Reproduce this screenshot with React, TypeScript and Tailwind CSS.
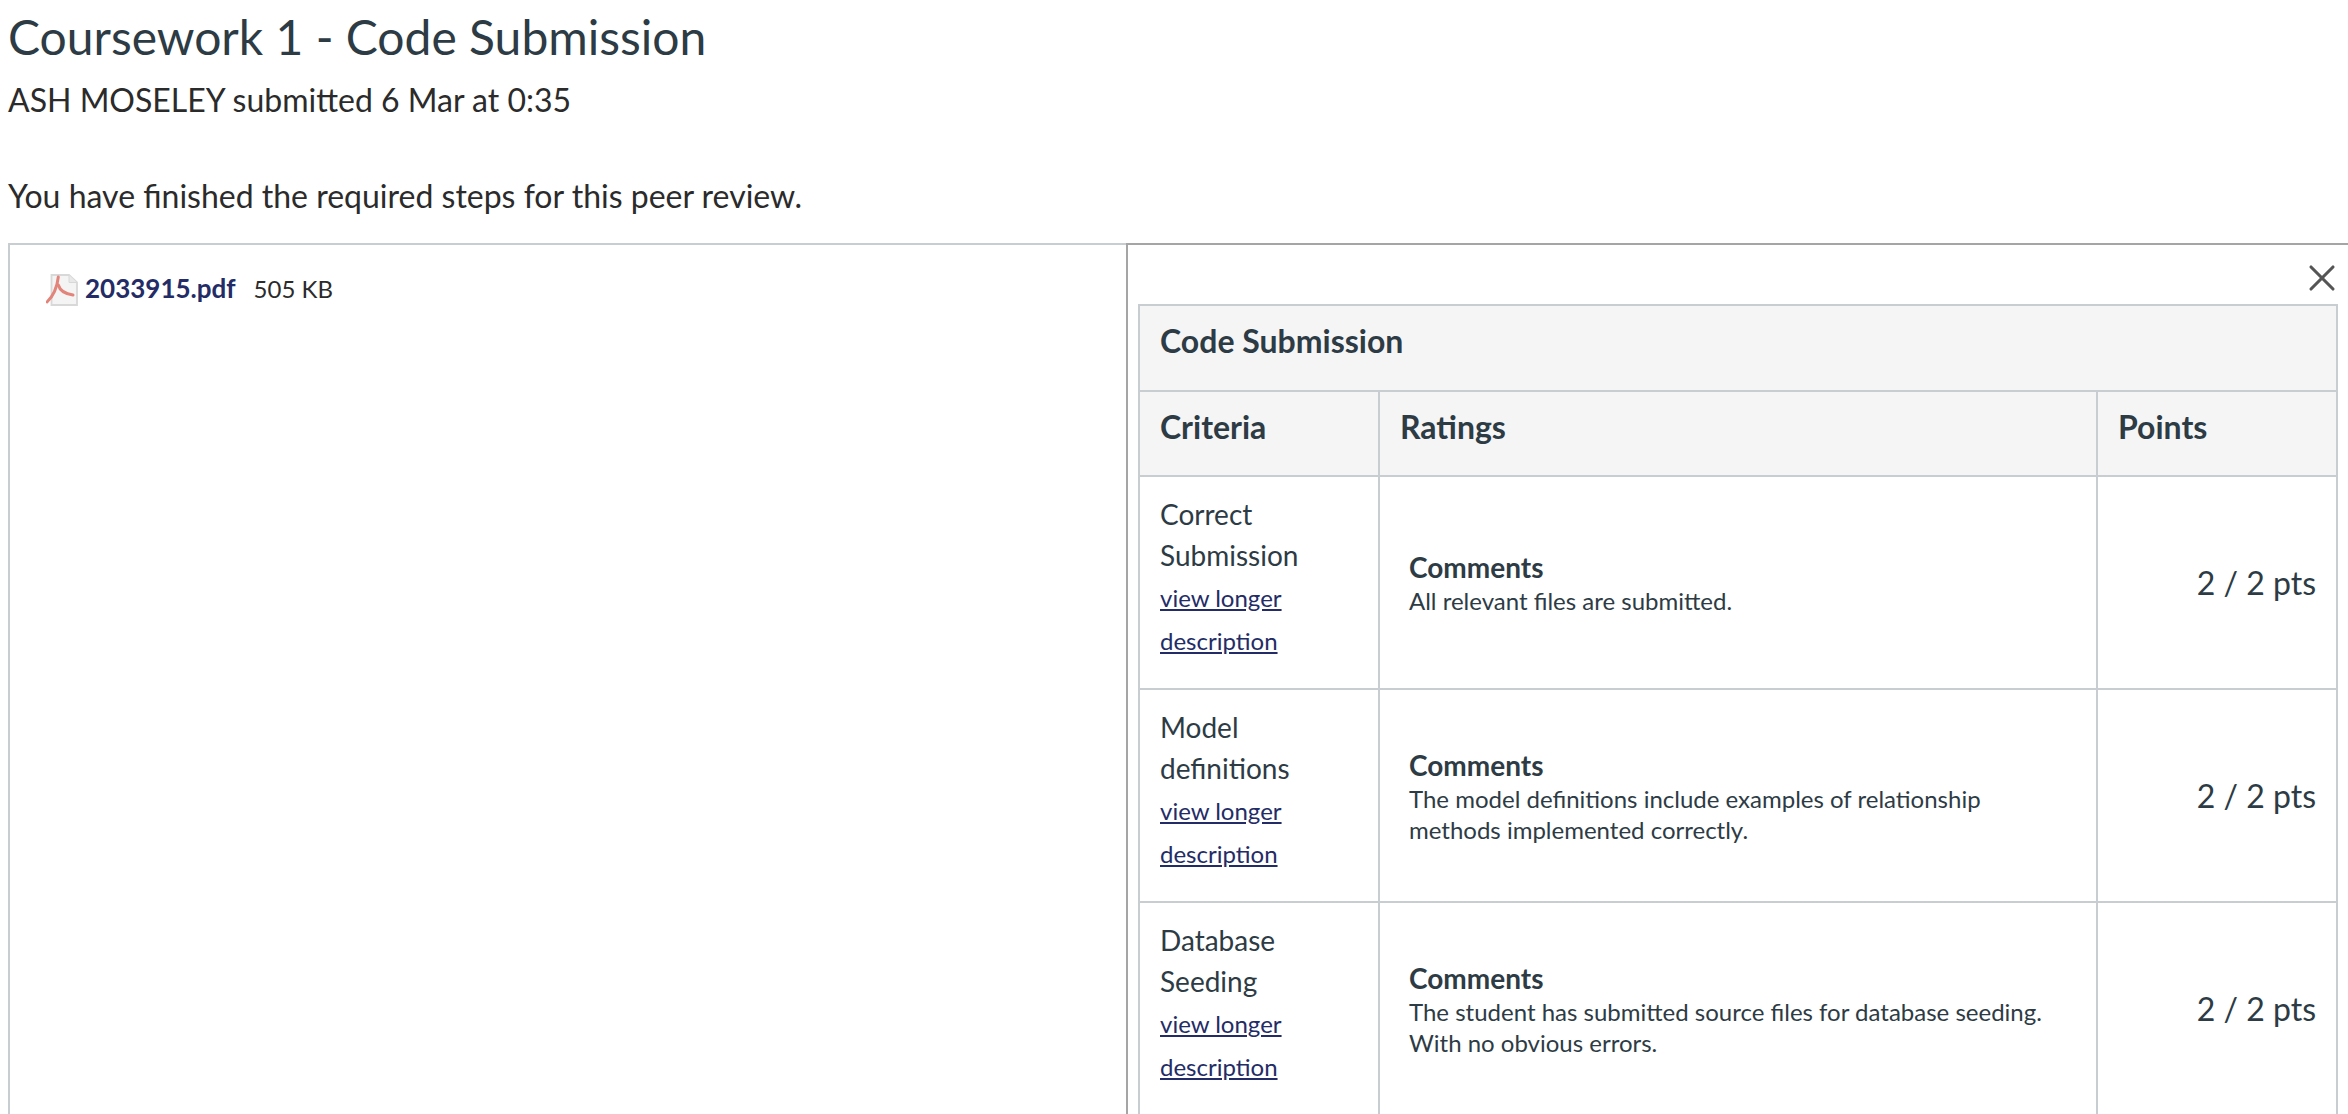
import { X } from 'lucide-react'

const rows = [
  {
    name: ['Correct', 'Submission'],
    comment: ['All relevant files are submitted.'],
  },
  {
    name: ['Model', 'definitions'],
    comment: ['The model definitions include examples of relationship', 'methods implemented correctly.'],
  },
  {
    name: ['Database', 'Seeding'],
    comment: ['The student has submitted source files for database seeding.', 'With no obvious errors.'],
  },
]

function PdfIcon() {
  return (
    <svg width="32" height="32" viewBox="0 0 32 32" className="mt-[2px] shrink-0 blur-[0.4px]">
      <path d="M5.5 1H23L31 8.5V31H5.5Z" fill="#f4f4f4" stroke="#d8d8d8" strokeWidth="1.8" />
      <path d="M23 1V8.5H31" fill="#e8e8e8" stroke="#d8d8d8" />
      <path d="M12.3 3C11.5 10 9.5 20 1 28" fill="none" stroke="#e2847a" strokeWidth="3" strokeLinecap="round" />
      <path d="M12.3 11C14 17 20 20 27 21" fill="none" stroke="#e2847a" strokeWidth="3" strokeLinecap="round" />
    </svg>
  )
}

export default function App() {
  return (
    <div className="h-[1114px] overflow-hidden bg-white font-['Lato','Noto_Sans',sans-serif] text-[#2d3b45]">
      <div className="pl-2 text-[#2b2b2b]">
        <h1 className="pt-[8px] text-[48px] leading-[58px] font-normal text-[#2d3b45]">Coursework 1 - Code Submission</h1>
        <p className="mt-[13px] text-[32px] leading-[42px]">ASH MOSELEY submitted 6 Mar at 0:35</p>
        <p className="mt-[54px] text-[32px] leading-[42px]">You have finished the required steps for this peer review.</p>
      </div>

      <div className="mt-[26px] ml-2 flex h-[900px] border-t-2 border-l-2 border-[#c7cdd1]">
        <div className="flex w-[1116px] items-start gap-[7px] pt-[27px] pl-[36px]">
          <PdfIcon />
          <a className="text-[26px] leading-[33px] font-bold text-[#232c66]">2033915.pdf</a>
          <span className="ml-[11px] text-[24px] leading-[33px] text-[#2b2b2b]">505 KB</span>
        </div>

        <div className="relative -mt-[2px] flex-1 border-t-2 border-l-2 border-[#a5a5a5] pt-[59px] pl-[10px]">
          <button className="absolute top-[11px] right-[4px] text-[#555555]">
            <X size={44} strokeWidth={1.7} />
          </button>

          <table className="w-[1200px] table-fixed border-collapse">
            <colgroup>
              <col className="w-[240px]" />
              <col className="w-[718px]" />
              <col className="w-[240px]" />
            </colgroup>
            <thead className="bg-[#f5f5f5] text-left">
              <tr className="h-[86px]">
                <th colSpan={3} className="border-2 border-[#c7cdd1] px-5 pb-[14px] text-[32px] font-bold">
                  Code Submission
                </th>
              </tr>
              <tr className="h-[85px]">
                <th className="border-2 border-[#c7cdd1] px-5 pb-[14px] text-[32px] font-bold">Criteria</th>
                <th className="border-2 border-[#c7cdd1] px-5 pb-[14px] text-[32px] font-bold">Ratings</th>
                <th className="border-2 border-[#c7cdd1] px-5 pb-[14px] text-[32px] font-bold">Points</th>
              </tr>
            </thead>
            <tbody>
              {rows.map((row) => (
                <tr key={row.name[0]} className="h-[213px] [&:last-child>td]:border-b-0">
                  <td className="border-2 border-[#c7cdd1] px-5 pb-[10px] align-middle">
                    <div className="text-[28px] leading-[41px]">
                      {row.name.map((line) => (
                        <div key={line}>{line}</div>
                      ))}
                    </div>
                    <div className="text-[24px] leading-[43px] text-[#232c66]">
                      <div>
                        <a className="underline">view longer</a>
                      </div>
                      <div>
                        <a className="underline">description</a>
                      </div>
                    </div>
                  </td>
                  <td className="border-2 border-[#c7cdd1] pr-5 pl-[29px] align-middle">
                    <div className="text-[28px] leading-[36px] font-bold">Comments</div>
                    {row.comment.map((line) => (
                      <div key={line} className="text-[24px] leading-[31px]">
                        {line}
                      </div>
                    ))}
                  </td>
                  <td className="border-2 border-[#c7cdd1] pr-5 text-right align-middle text-[32px]">2 / 2 pts</td>
                </tr>
              ))}
            </tbody>
          </table>
        </div>
      </div>
    </div>
  )
}
